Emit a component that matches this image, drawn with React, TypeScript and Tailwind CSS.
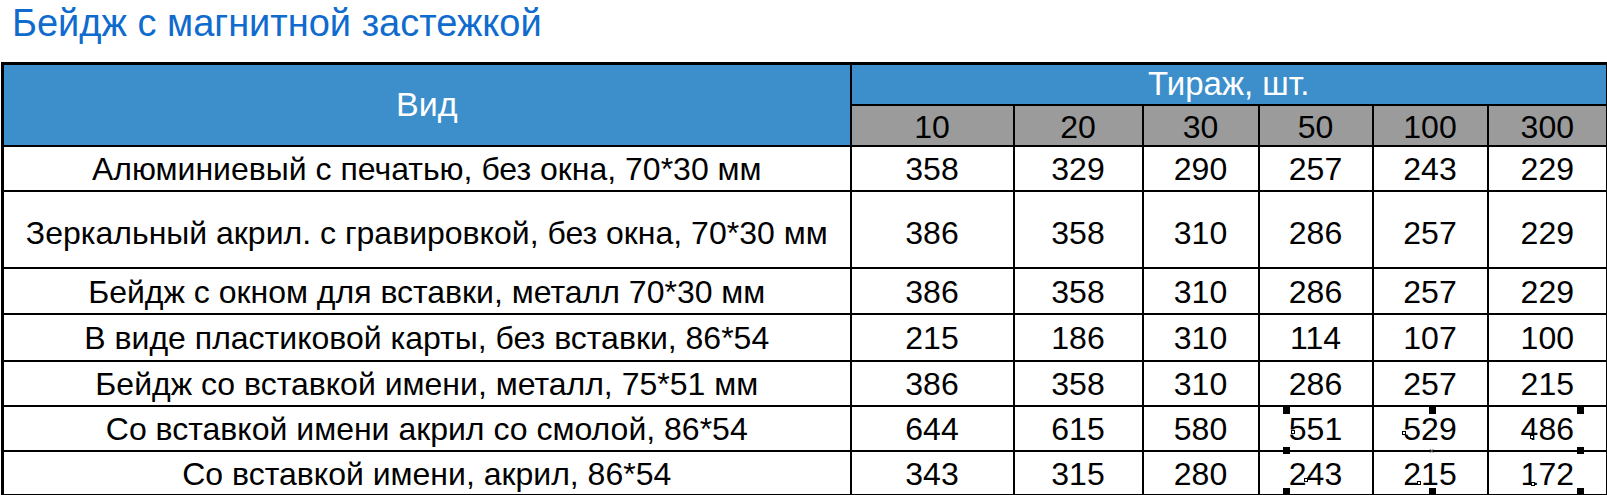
import React from 'react';

const counts = ['10', '20', '30', '50', '100', '300'];

const rows: { name: string; prices: string[]; h: string }[] = [
  { name: 'Алюминиевый с печатью, без окна, 70*30 мм', prices: ['358', '329', '290', '257', '243', '229'], h: 'h-[45px]' },
  { name: 'Зеркальный акрил. с гравировкой, без окна, 70*30 мм', prices: ['386', '358', '310', '286', '257', '229'], h: 'h-[77px]' },
  { name: 'Бейдж с окном для вставки, металл 70*30 мм', prices: ['386', '358', '310', '286', '257', '229'], h: 'h-[46px]' },
  { name: 'В виде пластиковой карты, без вставки, 86*54', prices: ['215', '186', '310', '114', '107', '100'], h: 'h-[47px]' },
  { name: 'Бейдж со вставкой имени, металл, 75*51 мм', prices: ['386', '358', '310', '286', '257', '215'], h: 'h-[45px]' },
  { name: 'Со вставкой имени акрил со смолой, 86*54', prices: ['644', '615', '580', '551', '529', '486'], h: 'h-[45px]' },
  { name: 'Со вставкой имени, акрил, 86*54', prices: ['343', '315', '280', '243', '215', '172'], h: 'h-[45px]' },
];

// selection handles left over from the editor the table was captured in
const handles = [
  'left-[1283px] top-[407px]', 'left-[1429px] top-[407px]', 'left-[1577px] top-[407px]',
  'left-[1283px] top-[447px]', 'left-[1577px] top-[447px]',
  'left-[1283px] top-[488px]', 'left-[1429px] top-[488px]', 'left-[1577px] top-[488px]',
];
const anchors = [
  'left-[1291px] top-[430px]', 'left-[1402px] top-[431px]', 'left-[1530px] top-[435px]',
  'left-[1304px] top-[478px]', 'left-[1417px] top-[481px]', 'left-[1531px] top-[482px]',
];

export default function App() {
  return (
    <div className="relative w-[1607px] h-[495px] overflow-hidden bg-white font-['Liberation_Sans',Arial,sans-serif]">
      <div className="h-[62px] pl-[12px] pt-[1px]">
        <h1 className="text-[38px] leading-[44px] text-[#0f6bcd]">Бейдж с магнитной застежкой</h1>
      </div>
      <table className="ml-[1px] w-[1605px] table-fixed border-collapse border-[3px] border-black text-black">
        <colgroup>
          <col className="w-[848px]" />
          <col className="w-[163px]" />
          <col className="w-[129px]" />
          <col className="w-[116px]" />
          <col className="w-[114px]" />
          <col className="w-[115px]" />
          <col className="w-[120px]" />
        </colgroup>
        <thead>
          <tr className="h-[41px]">
            <th rowSpan={2} className="border-2 border-black bg-[#3c8fca] p-0 text-[34px] font-normal text-white">
              Вид
            </th>
            <th colSpan={6} className="border-2 border-black bg-[#3c8fca] p-0 font-normal text-white">
              <span className="inline-block text-[33px] leading-[36px] font-['Liberation_Sans_Narrow','Liberation_Sans',sans-serif]">
                Тираж, шт.
              </span>
            </th>
          </tr>
          <tr className="h-[39px]">
            {counts.map(c => (
              <th key={c} className="border-2 border-black bg-[#9b9b9b] p-0 font-normal">
                <span className="inline-block pt-[4px] text-[32px] leading-[34px] font-['Liberation_Sans_Narrow','Liberation_Sans',sans-serif]">
                  {c}
                </span>
              </th>
            ))}
          </tr>
        </thead>
        <tbody>
          {rows.map((r, i) => (
            <tr key={i} className={r.h}>
              <td className={`border-2 border-black p-0 text-center text-[32px] leading-[34px] ${i === 1 ? 'pt-[8px]' : 'pt-[2px]'}`}>
                {r.name}
              </td>
              {r.prices.map((p, j) => (
                <td key={j} className={`border-2 border-black p-0 text-center text-[32px] leading-[34px] ${i === 1 ? 'pt-[8px]' : 'pt-[2px]'}`}>
                  {p}
                </td>
              ))}
            </tr>
          ))}
        </tbody>
      </table>
      {handles.map((pos, i) => (
        <div key={i} className={`absolute ${pos} h-[7px] w-[7px] bg-black`} />
      ))}
      {anchors.map((pos, i) => (
        <div key={i} className={`absolute ${pos} h-[4px] w-[4px] border border-black bg-white`} />
      ))}
      <div className="absolute left-[1429px] top-[447px] text-[9px] leading-[8px] text-[#666]">×</div>
    </div>
  );
}
